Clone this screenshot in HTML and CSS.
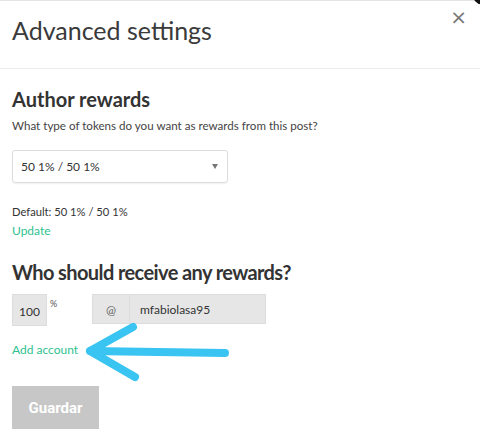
FILE: index.html
```html
<!DOCTYPE html>
<html>
<head>
<meta charset="utf-8">
<link rel="stylesheet" href="styles.css">
</head>
<body>
<div class="modal">
  <div class="corner"></div>
  <header class="head">
    <h1 class="title">Advanced settings</h1>
    <span class="close">×</span>
  </header>
  <section class="content">
    <h2 class="h2 h2-first">Author rewards</h2>
    <p class="hint">What type of tokens do you want as rewards from this post?</p>
    <div class="select"><span>50 1% / 50 1%</span><span class="caret"></span></div>
    <p class="small default">Default: 50 1% / 50 1%</p>
    <a class="link">Update</a>
    <h2 class="h2 h2-second">Who should receive any rewards?</h2>
    <div class="row">
      <div class="pct"><span class="pct-box">100</span><sup class="pct-sign">%</sup></div>
      <div class="acct"><span class="at">@</span><span class="name">mfabiolasa95</span></div>
    </div>
    <div class="addrow">
      <a class="link">Add account</a>
      <svg class="arrow" width="160" height="64" viewBox="0 0 160 64">
        <path d="M6 31 L141 33 M6 31 L49 7 M6 31 L51 57" fill="none" stroke="#39c4f1" stroke-width="8" stroke-linecap="round" stroke-linejoin="round"/>
      </svg>
    </div>
    <button class="btn">Guardar</button>
  </section>
</div>
</body>
</html>
```

FILE: styles.css
```css
html, body { margin: 0; padding: 0; background: #fff; }
body { width: 480px; height: 437px; overflow: hidden; font-family: Lato, "Open Sans", sans-serif; color: #333; }
.modal { position: relative; border-top: 1px solid #e4e4e4; height: 436px; }
.corner { position: absolute; top: -8px; right: -8px; width: 16px; height: 12px; border-radius: 0 0 0 14px; background: #111; }
.head { height: 67px; border-bottom: 1px solid #ececec; display: flex; justify-content: space-between; align-items: flex-start; padding: 0 12px 0 12px; }
.title { margin: 14px 0 0 0; font-size: 25px; font-weight: 400; color: #3a3a3a; letter-spacing: 0; }
.close { font-size: 20px; color: #777; margin-top: 6px; margin-right: 1px; font-family: "DejaVu Sans", sans-serif; line-height: 20px; }
.content { padding: 0 12px; }
.h2 { margin: 0; font-size: 20px; font-weight: 700; color: #333; }
.h2-first { margin-top: 18px; }
.hint { margin: 8px 0 0 0; font-size: 11.6px; color: #444; }
.select { width: 197px; height: 31px; margin-top: 18px; border: 1px solid #ddd; border-radius: 3px; box-shadow: 0 1px 2px rgba(0,0,0,0.06); display: flex; align-items: center; justify-content: space-between; padding: 0 9px 0 8px; font-size: 12px; color: #333; }
.caret { width: 0; height: 0; border-left: 3px solid transparent; border-right: 3px solid transparent; border-top: 5px solid #777; }
.small { font-size: 11.2px; margin: 0; }
.default { margin-top: 22px; }
.link { display: block; color: #2fc28f; font-size: 12px; margin-top: 5px; }
.h2-second { margin-top: 22px; letter-spacing: -0.6px; }
.row { display: flex; gap: 0; margin-top: 10px; height: 32px; }
.pct { display: flex; width: 80px; }
.pct-box { width: 35px; height: 32px; background: #e6e6e6; border: 1px solid #ddd; box-sizing: border-box; display: flex; align-items: center; justify-content: center; font-size: 12px; padding-top: 2px; }
.pct-sign { font-size: 9px; margin-left: 3px; margin-top: 5px; color: #555; line-height: 1; }
.acct { display: flex; height: 30px; }
.at { width: 38px; background: #e6e6e6; border: 1px solid #ddd; box-sizing: border-box; display: flex; align-items: center; justify-content: center; font-size: 12px; color: #666; }
.name { width: 136px; background: #e6e6e6; border: 1px solid #ddd; border-left: 0; box-sizing: border-box; display: flex; align-items: center; padding-left: 10px; font-size: 12px; color: #333; }
.addrow { position: relative; height: 40px; }
.addrow .link { margin-top: 16px; }
.arrow { position: absolute; left: 72px; top: -22px; }
.btn { display: block; margin-top: 4px; width: 87px; height: 43px; background: #c7c7c7; border: 0; color: #fff; font-family: Roboto, sans-serif; font-weight: 700; font-size: 15px; padding: 0; }
```
